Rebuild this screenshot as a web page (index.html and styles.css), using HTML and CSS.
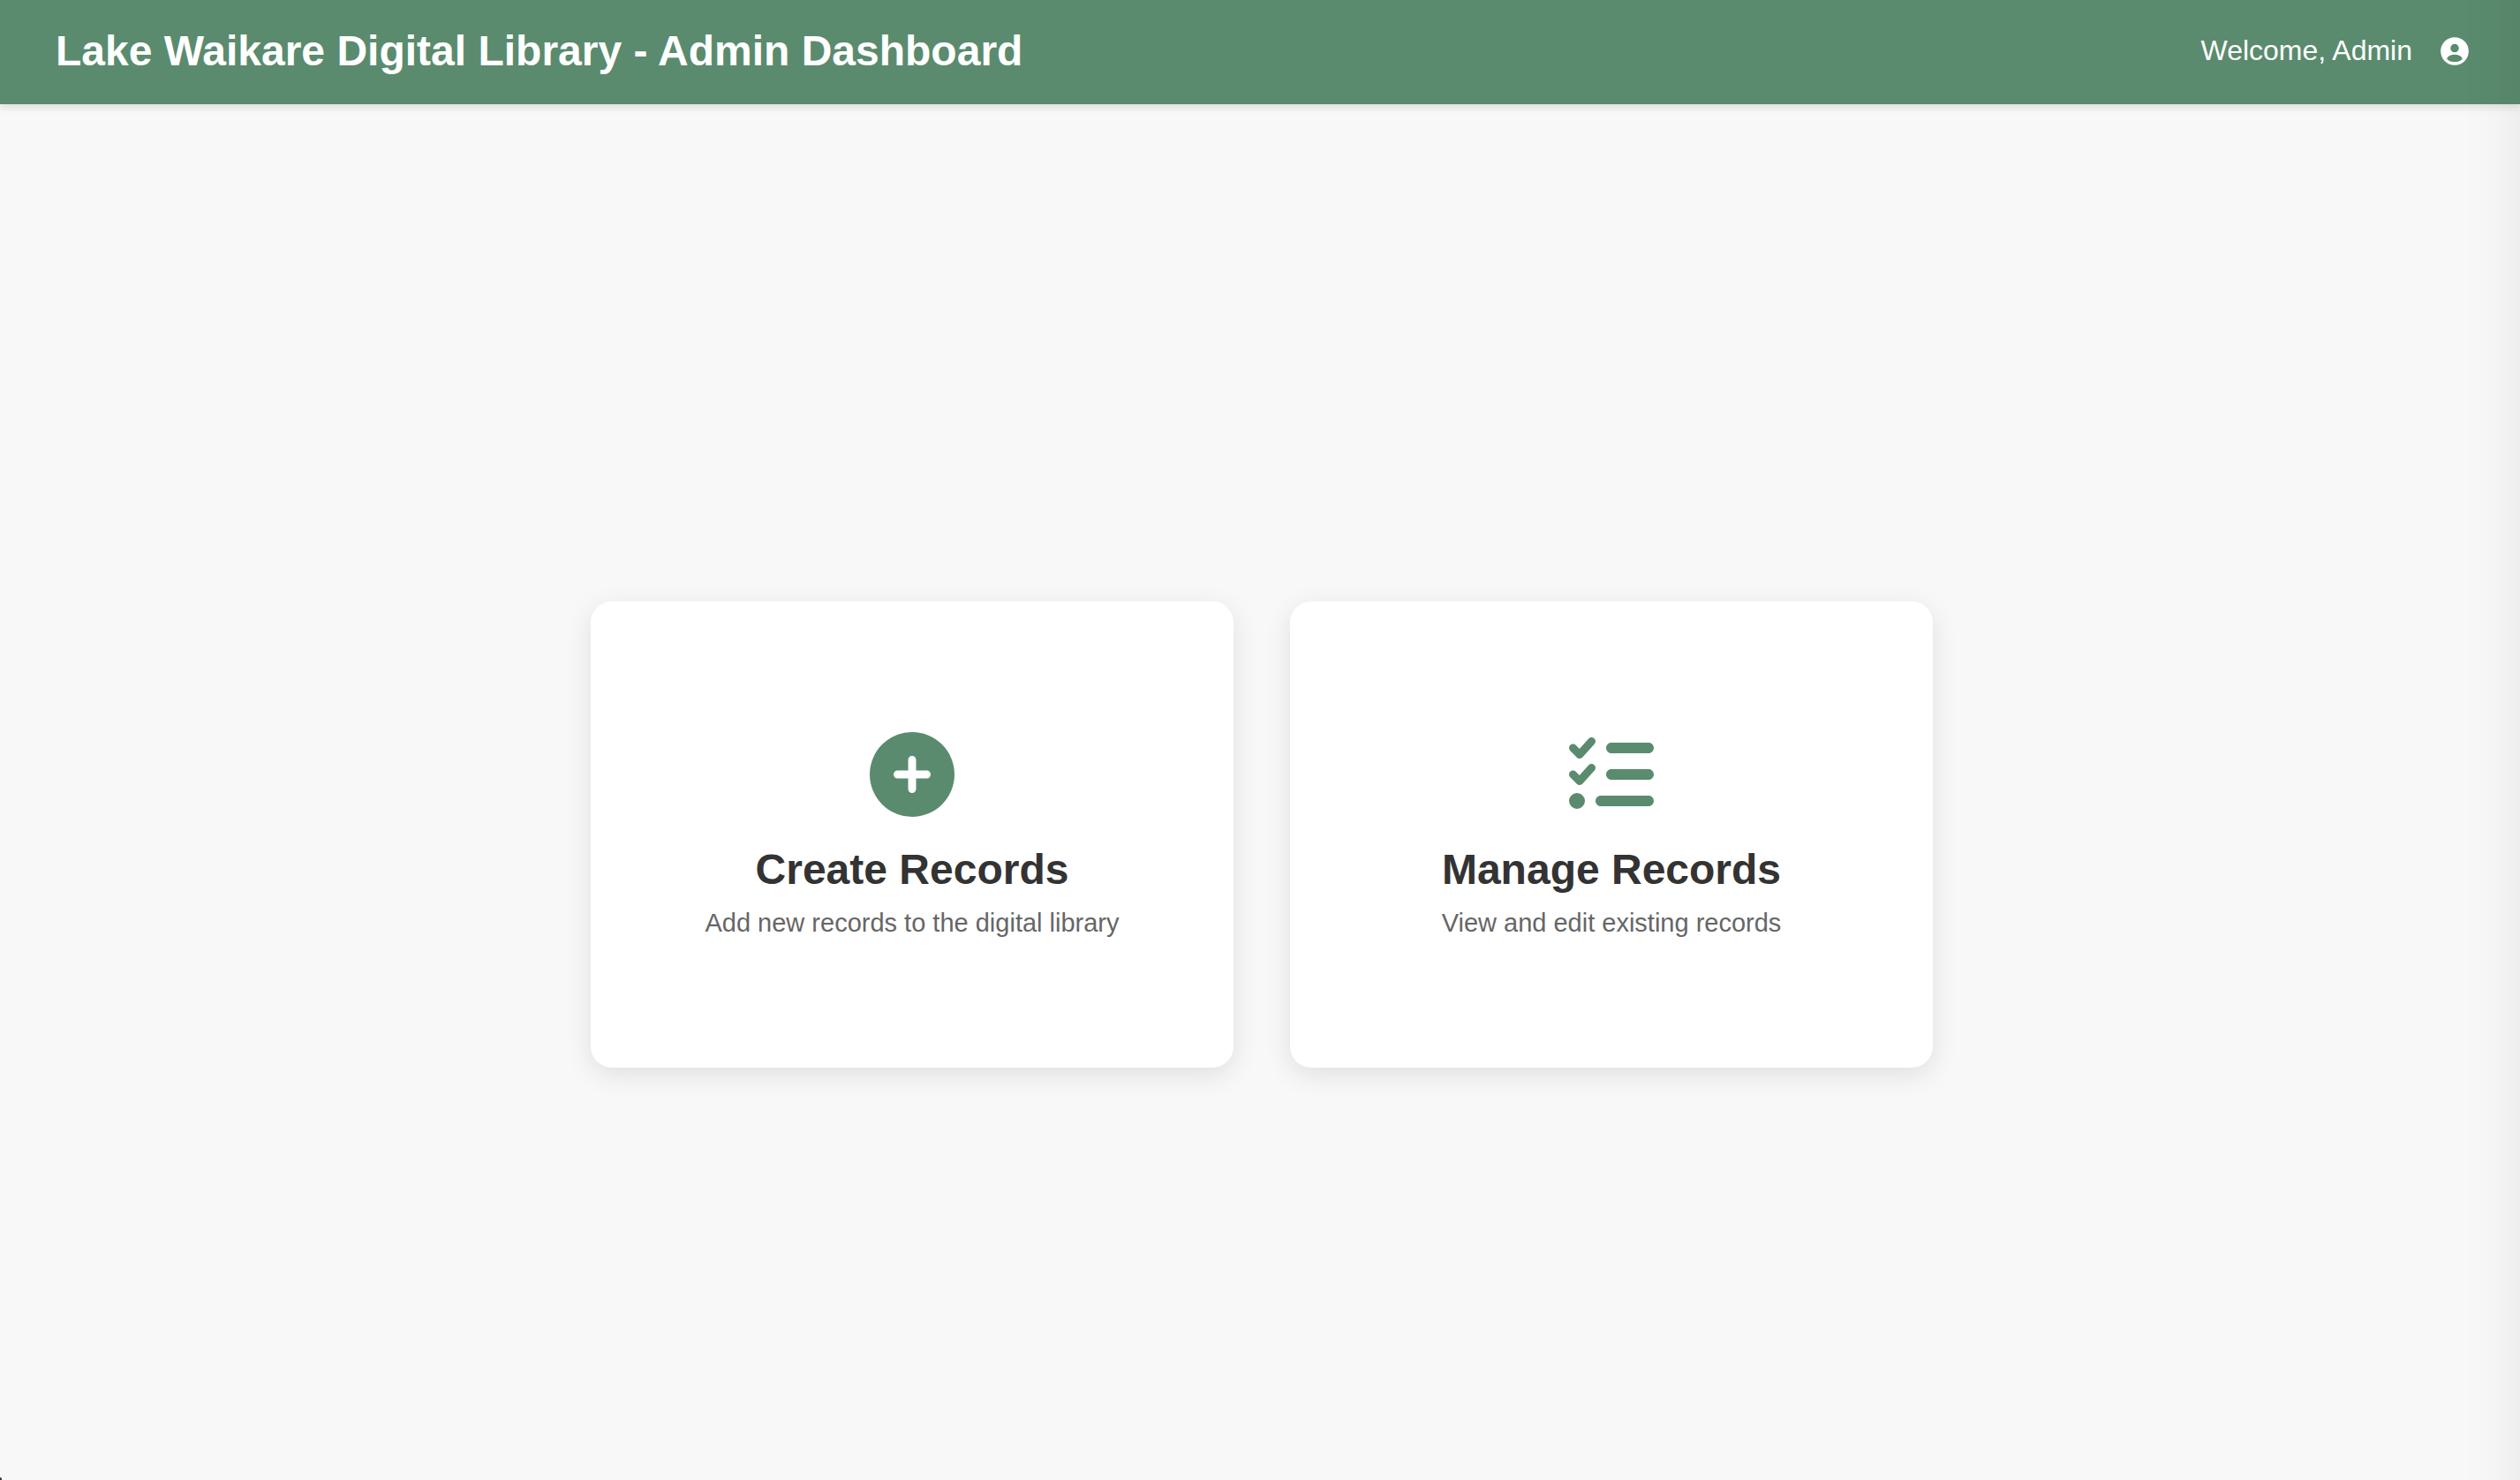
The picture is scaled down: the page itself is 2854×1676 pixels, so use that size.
FILE: index.html
```html
<!DOCTYPE html>
<html lang="en">
<head>
  <meta charset="utf-8">
  <title>Lake Waikare Digital Library - Admin Dashboard</title>
  <link rel="stylesheet" href="styles.css">
</head>
<body>
  <header class="header">
    <h1 class="header-title">Lake Waikare Digital Library - Admin Dashboard</h1>
    <div class="header-user">
      <span class="welcome">Welcome, Admin</span>
      <button class="account" type="button" aria-label="Account">
        <svg class="account-icon" viewBox="0 0 24 24" aria-hidden="true"><path fill="currentColor" fill-rule="evenodd" d="M12 2a10 10 0 1 0 0 20 10 10 0 0 0 0-20zM9 9.800a3 3 0 1 1 6 0 3 3 0 0 1-6 0zM6.700 17.800c-.3-.4-.2-.8.1-1.200.8-1.400 2.900-2.200 5.200-2.200s4.400.8 5.200 2.200c.3.4.4.8.1 1.200-1.300 1.200-3.100 1.800-5.300 1.800s-4-.6-5.300-1.800z"/></svg>
      </button>
    </div>
  </header>
  <main class="main">
    <a class="card" href="#create">
      <svg class="card-icon" viewBox="0 0 512 512" aria-hidden="true"><path fill="currentColor" d="M256 512A256 256 0 1 0 256 0a256 256 0 1 0 0 512zM232 344V280H168c-13.300 0-24-10.700-24-24s10.700-24 24-24h64V168c0-13.300 10.700-24 24-24s24 10.700 24 24v64h64c13.300 0 24 10.700 24 24s-10.700 24-24 24H280v64c0 13.300-10.700 24-24 24s-24-10.700-24-24z"/></svg>
      <h2 class="card-title">Create Records</h2>
      <p class="card-text">Add new records to the digital library</p>
    </a>
    <a class="card" href="#manage">
      <svg class="card-icon" viewBox="0 0 512 512" aria-hidden="true"><path fill="currentColor" d="M152.100 38.200c9.900 8.900 10.700 24 1.800 33.900l-72 80c-4.400 4.900-10.600 7.800-17.200 7.900s-12.900-2.400-17.600-7L7 113C-2.300 103.600-2.300 88.400 7 79s24.600-9.400 33.900 0l22.100 22.100 55.100-61.200c8.900-9.900 24-10.700 33.900-1.800zm0 160c9.900 8.900 10.700 24 1.800 33.900l-72 80c-4.400 4.900-10.600 7.800-17.200 7.900s-12.900-2.400-17.600-7L7 273c-9.400-9.400-9.400-24.600 0-33.900s24.600-9.400 33.900 0l22.100 22.100 55.100-61.200c8.900-9.900 24-10.700 33.900-1.800zM224 96c0-17.700 14.300-32 32-32H480c17.700 0 32 14.300 32 32s-14.300 32-32 32H256c-17.700 0-32-14.300-32-32zm0 160c0-17.700 14.300-32 32-32H480c17.700 0 32 14.300 32 32s-14.300 32-32 32H256c-17.700 0-32-14.300-32-32zM160 416c0-17.700 14.300-32 32-32H480c17.700 0 32 14.300 32 32s-14.300 32-32 32H192c-17.700 0-32-14.300-32-32zM48 368a48 48 0 1 1 0 96 48 48 0 1 1 0-96z"/></svg>
      <h2 class="card-title">Manage Records</h2>
      <p class="card-text">View and edit existing records</p>
    </a>
  </main>
</body>
</html>
```
FILE: styles.css
```css
* {
  box-sizing: border-box;
  margin: 0;
  padding: 0;
}

body {
  display: flex;
  flex-direction: column;
  min-height: 100vh;
  background: #f8f8f8;
  color: #333;
  font-family: Arial, "Liberation Sans", sans-serif;
}

/* soft shade along the right edge of the window */
body::after {
  content: "";
  position: fixed;
  inset: 0 0 0 auto;
  width: 64px;
  background: linear-gradient(to right, rgba(0, 0, 0, 0), rgba(0, 0, 0, 0.01) 50%, rgba(0, 0, 0, 0.04));
  pointer-events: none;
}

/* dark notch in the bottom-left window corner */
body::before {
  content: "";
  position: fixed;
  left: 0;
  bottom: 0;
  width: 2px;
  height: 3px;
  border-top-right-radius: 2px;
  background: #33352f;
}

.header {
  display: flex;
  justify-content: space-between;
  align-items: center;
  padding: 30px 55px 33px 63px;
  background: #5a8b6e;
  color: #fff;
  box-shadow: 0 4px 8px rgba(0, 0, 0, 0.1);
}

.header-title {
  font-size: 48px;
  line-height: 55px;
}

.header-user {
  display: flex;
  align-items: center;
  gap: 29px;
  font-size: 32px;
  line-height: 36px;
}

.welcome {
  padding-bottom: 2px;
}

.account {
  display: flex;
  border: 0;
  background: none;
  color: inherit;
  cursor: pointer;
}

.account-icon {
  width: 38px;
  height: 38px;
}

.main {
  flex: 1;
  display: flex;
  justify-content: center;
  align-items: center;
  gap: 64px;
  padding: 96px 0 0 4px;
}

.card {
  display: flex;
  flex-direction: column;
  align-items: center;
  width: 728px;
  padding: 148px 64px 147px;
  border-radius: 24px;
  background: #fff;
  color: inherit;
  text-align: center;
  text-decoration: none;
  box-shadow: 0 8px 30px rgba(0, 0, 0, 0.1);
}

.card-icon {
  width: 96px;
  height: 96px;
  margin-bottom: 32px;
  color: #5a8b6e;
}

.card-title {
  margin-bottom: 17px;
  font-size: 48px;
  line-height: 55px;
}

.card-text {
  color: #666;
  font-size: 29px;
  line-height: 33px;
}
```
